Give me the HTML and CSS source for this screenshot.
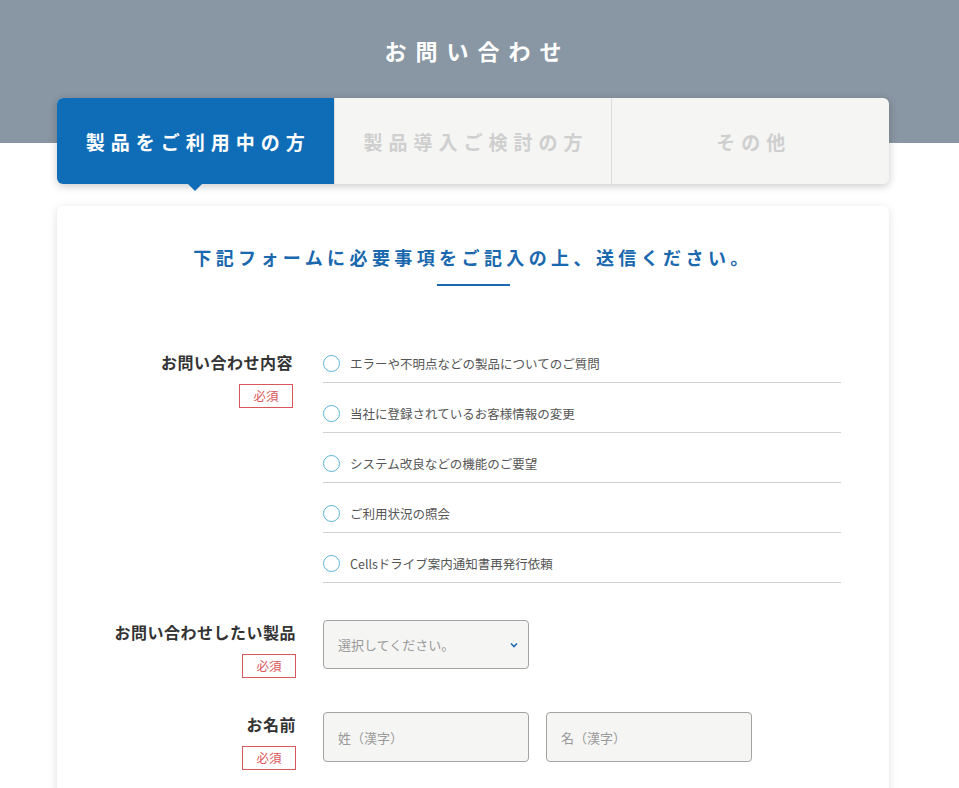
FILE: index.html
```html
<!DOCTYPE html>
<html lang="ja">
<head>
  <meta charset="UTF-8">
  <meta name="viewport" content="width=device-width, initial-scale=1.0">
  <title>お問い合わせ</title>
  <link rel="stylesheet" href="styles.css">
</head>
<body>
  <div class="page">
    <!-- タイトル -->
    <h1 class="page-title">お問い合わせ</h1>

    <!-- タブ -->
    <div class="tabs">
      <a class="tab active">製品をご利用中の方</a>
      <a class="tab">製品導入ご検討の方</a>
      <a class="tab">その他</a>
    </div>

    <!-- フォーム -->
    <div class="form-card">
      <h2 class="form-lead">下記フォームに必要事項をご記入の上、送信ください。</h2>
      <div class="lead-line"></div>

      <div class="form-row first">
        <div class="form-label">
          <span>お問い合わせ内容</span>
          <span class="required">必須</span>
        </div>
        <div class="form-field">
          <label class="radio-item"><span class="radio"></span>エラーや不明点などの製品についてのご質問</label>
          <label class="radio-item"><span class="radio"></span>当社に登録されているお客様情報の変更</label>
          <label class="radio-item"><span class="radio"></span>システム改良などの機能のご要望</label>
          <label class="radio-item"><span class="radio"></span>ご利用状況の照会</label>
          <label class="radio-item"><span class="radio"></span>Cellsドライブ案内通知書再発行依頼</label>
        </div>
      </div>

      <div class="form-row">
        <div class="form-label">
          <span>お問い合わせしたい製品</span>
          <span class="required">必須</span>
        </div>
        <div class="form-field">
          <div class="select-box">
            <span>選択してください。</span>
            <svg width="8" height="6" viewBox="0 0 8 6"><path d="M1 1.5 L4 4.5 L7 1.5" fill="none" stroke="#1f6fb5" stroke-width="1.6"/></svg>
          </div>
        </div>
      </div>

      <div class="form-row">
        <div class="form-label">
          <span>お名前</span>
          <span class="required">必須</span>
        </div>
        <div class="form-field inline">
          <div class="text-box">姓（漢字）</div>
          <div class="text-box">名（漢字）</div>
        </div>
      </div>
    </div>
  </div>
</body>
</html>
```

FILE: styles.css
```css
body {
  margin: 0;
  font-family: "Noto Sans CJK JP", "Noto Sans", sans-serif;
  color: #333;
  background: linear-gradient(#8996a3 143px, #fff 143px) no-repeat;
}
.page {
  width: 946px;
  padding-top: 35px;
}
.page-title {
  margin: 0 0 33px;
  text-align: center;
  color: #fff;
  font-size: 22px;
  line-height: 30px;
  font-weight: bold;
  letter-spacing: 9px;
  text-indent: 9px;
}
.tabs {
  width: 832px;
  margin: 0 auto;
  display: flex;
  height: 86px;
  border-radius: 6px;
  background-color: #f5f5f3;
  box-shadow: 0 2px 8px rgba(0, 0, 0, 0.22);
}
.tab {
  flex: 1;
  display: flex;
  align-items: center;
  justify-content: center;
  font-size: 19px;
  font-weight: bold;
  letter-spacing: 6px;
  text-indent: 6px;
  color: #cfcfcf;
  position: relative;
}
.tab + .tab {
  border-left: 1px solid #dcdcdc;
}
.tab.active {
  background-color: #0f6db8;
  color: #fff;
  border-radius: 6px 0 0 6px;
}
.tab.active::after {
  content: "";
  position: absolute;
  left: 50%;
  bottom: -7px;
  margin-left: -7px;
  border-left: 7px solid transparent;
  border-right: 7px solid transparent;
  border-top: 7px solid #0f6db8;
}
.form-card {
  width: 832px;
  margin: 22px auto 0;
  background-color: #fff;
  border-radius: 6px;
  box-shadow: 0 2px 10px rgba(0, 0, 0, 0.13);
  padding: 38px 48px 40px 0;
  box-sizing: border-box;
}
.form-lead {
  margin: 0;
  padding-left: 48px;
  text-align: center;
  color: #1a68ad;
  font-size: 18px;
  line-height: 26px;
  font-weight: bold;
  letter-spacing: 4.4px;
}
.lead-line {
  width: 73px;
  height: 2px;
  background-color: #1a68ad;
  margin: 14px 0 47px 380px;
}
.form-row {
  display: flex;
  margin-bottom: 34px;
}
.form-row.first {
  margin-bottom: 37px;
}
.form-label {
  width: 239px;
  flex-shrink: 0;
  display: flex;
  flex-direction: column;
  align-items: flex-end;
  font-size: 16px;
  line-height: 24px;
  font-weight: bold;
  letter-spacing: 0.5px;
  color: #333;
}
.form-row.first .form-label {
  padding-top: 17px;
  padding-right: 3px;
  box-sizing: border-box;
}
.required {
  margin-top: 10px;
  width: 54px;
  height: 24px;
  box-sizing: border-box;
  border: 1px solid #d9575a;
  color: #d9575a;
  font-size: 12.5px;
  font-weight: normal;
  line-height: 22px;
  text-align: center;
  letter-spacing: 0;
}
.form-field {
  flex: 1;
  margin-left: 27px;
}
.form-field.inline {
  display: flex;
  gap: 17px;
}
.radio-item {
  display: flex;
  align-items: center;
  height: 50px;
  padding-top: 12px;
  box-sizing: border-box;
  border-bottom: 1px solid #d2d2d2;
  font-size: 12.5px;
  color: #555;
}
.radio {
  width: 17px;
  height: 17px;
  box-sizing: border-box;
  border: 1.5px solid #5ab4d6;
  border-radius: 50%;
  margin-right: 10px;
}
.select-box,
.text-box {
  width: 206px;
  height: 50px;
  box-sizing: border-box;
  border: 1px solid #a3a3a3;
  border-radius: 4px;
  background-color: #f5f5f3;
  padding: 0 10px 0 14px;
  display: flex;
  align-items: center;
  font-size: 13px;
  color: #9a9a9a;
}
.select-box {
  height: 49px;
  justify-content: space-between;
}
```
